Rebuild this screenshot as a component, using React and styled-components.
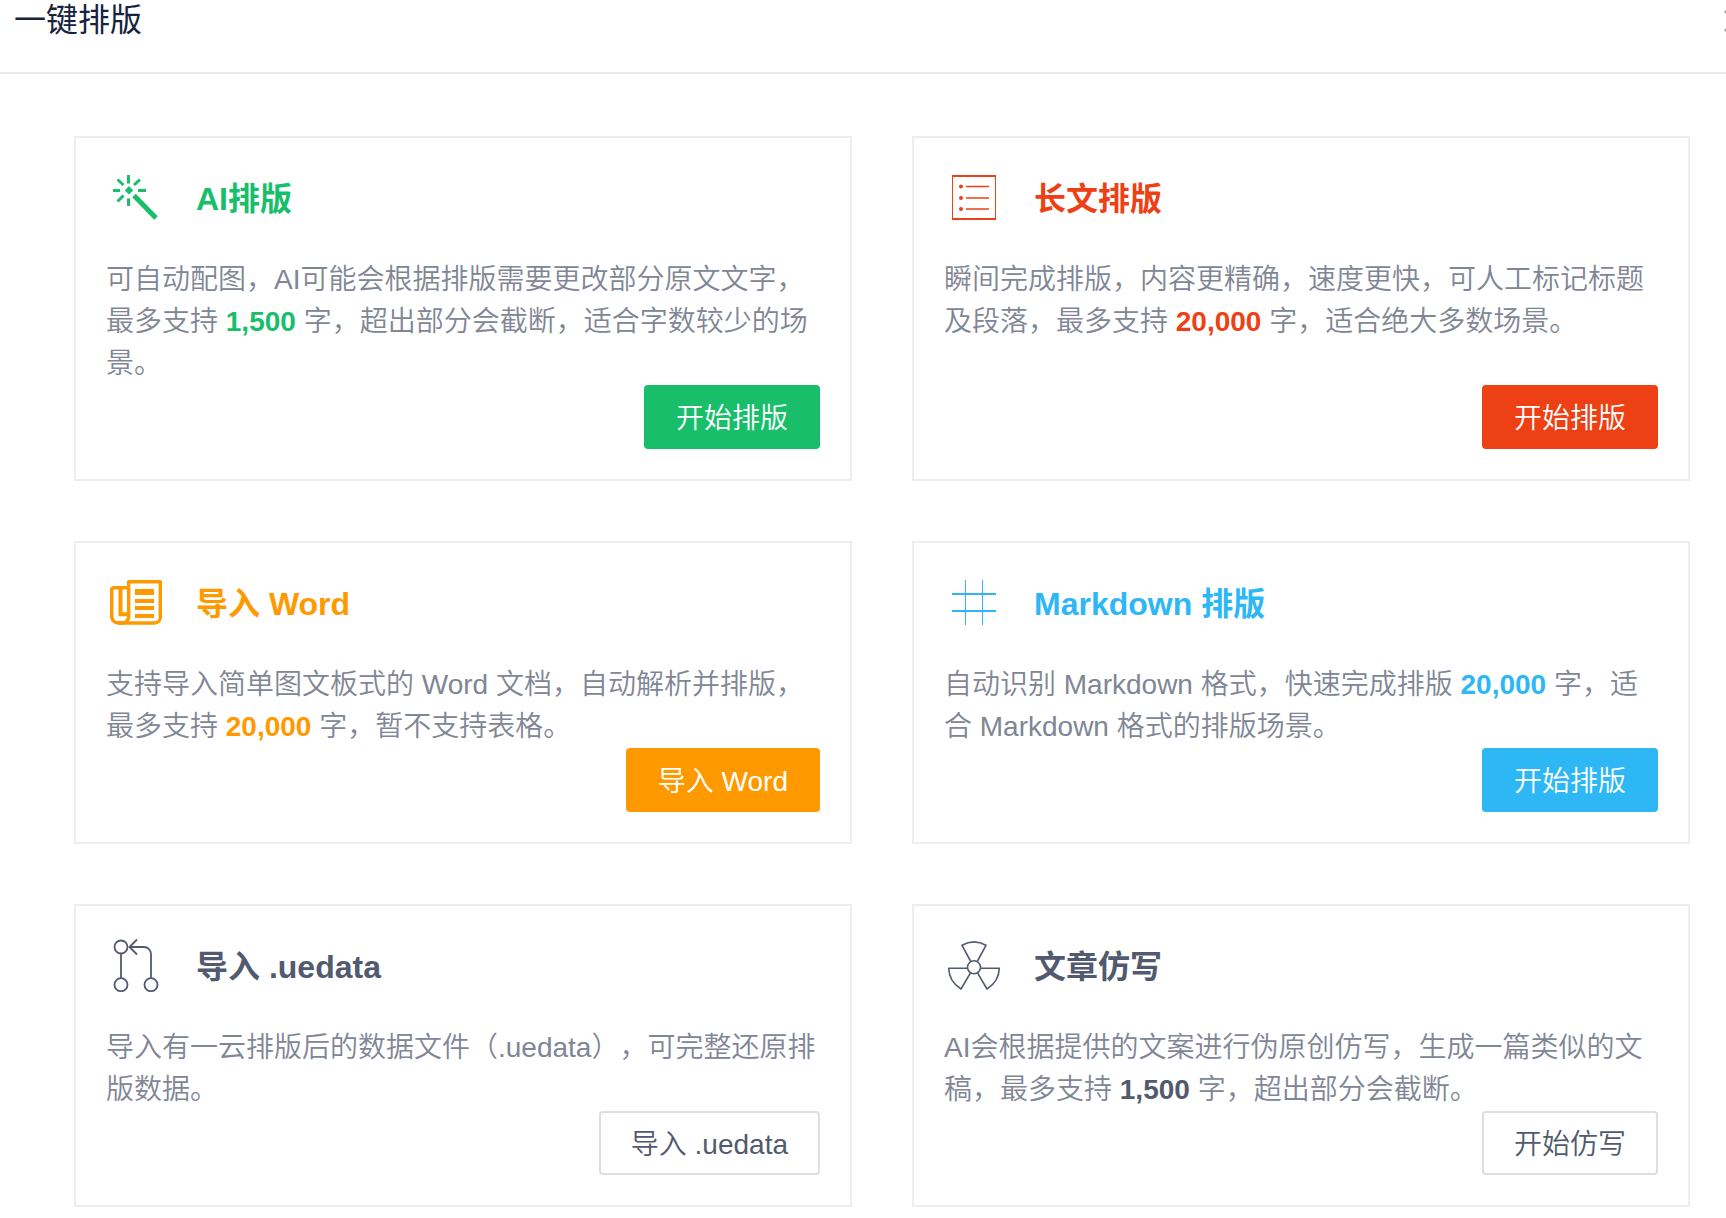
import React from "react";
import styled, { createGlobalStyle } from "styled-components";

const GlobalStyle = createGlobalStyle`
  * {
    box-sizing: border-box;
  }

  body {
    margin: 0;
    background: #fff;
    font-family: "Liberation Sans", "Noto Sans CJK SC", sans-serif;
    text-spacing-trim: space-all;
    overflow-x: hidden;
  }
`;

const Modal = styled.section`
  width: 100%;
  overflow: hidden;
`;

const ModalHeader = styled.header`
  display: flex;
  justify-content: space-between;
  align-items: flex-start;
  height: 74px;
  padding-left: 14px;
  border-bottom: 2px solid #e8eaec;
`;

const ModalTitle = styled.h1`
  margin: 0;
  font-size: 32px;
  font-weight: 400;
  line-height: 40px;
  color: #17233d;
`;

/* The close button hangs over the right edge of the dialog */
const CloseButton = styled.button`
  display: flex;
  align-items: center;
  height: 42px;
  margin-right: -20px;
  padding: 0;
  border: 0;
  background: none;
  color: #999;
  cursor: pointer;
`;

const CardGrid = styled.main`
  display: grid;
  grid-template-columns: repeat(2, minmax(0, 1fr));
  gap: 60px;
  padding: 62px 36px 10px 74px;
`;

const Card = styled.article`
  display: flex;
  flex-direction: column;
  padding: 30px;
  border: 2px solid #eee;
`;

const CardHeader = styled.div`
  display: flex;
  align-items: center;
  gap: 30px;
  height: 60px;
  margin-bottom: 31px;
  color: ${({ $color }) => $color};
`;

const CardTitle = styled.h2`
  margin: 0;
  padding-top: 2px;
  font-size: 32px;
  font-weight: 700;
  line-height: 58px;
`;

const Description = styled.p`
  flex: 1;
  margin: 0;
  font-size: 28px;
  font-weight: 350;
  line-height: 42px;
  color: #808695;
`;

const Limit = styled.strong`
  font-weight: 700;
  color: ${({ $color }) => $color};
`;

const ActionButton = styled.button`
  align-self: flex-end;
  height: 64px;
  padding: 4px 30px 0;
  border: 2px solid ${({ $color }) => $color || "#dcdee2"};
  border-radius: 4px;
  background: ${({ $color }) => $color || "#fff"};
  color: ${({ $color }) => ($color ? "#fff" : "#515a6e")};
  font-family: inherit;
  font-size: 28px;
  font-weight: 350;
  line-height: 40px;
  cursor: pointer;
`;

const Icon = ({ children }) => (
  <svg width="60" height="60" viewBox="0 0 60 60" fill="none" stroke="currentColor" aria-hidden="true">
    {children}
  </svg>
);

const WandIcon = () => (
  <Icon>
    <path
      d="M22.5 7V15.5M22.5 30.5V38M7 22.5H14M32 22.5H40M11.5 11.5L17.5 17M34 11.5L28 17M11.5 33.5L17.5 27.5"
      strokeWidth="3"
    />
    <path d="M23 18L27.2 22.5L23 26.5L18.8 22.5Z" fill="currentColor" stroke="none" />
    <path d="M28 27.5L50 50" strokeWidth="5" />
  </Icon>
);

const ListIcon = () => (
  <Icon>
    <path d="M8.5 7V52M51.5 7V52" />
    <path d="M8 8H52M8 51H52" strokeWidth="2" />
    <path d="M22 18.5H45M22 30H45M22 41H45" strokeWidth="1.6" />
    <g fill="currentColor" stroke="none">
      <circle cx="17" cy="18.5" r="2" />
      <circle cx="17" cy="30" r="2" />
      <circle cx="17" cy="41" r="2" />
    </g>
  </Icon>
);

const PaperIcon = () => (
  <Icon>
    <path d="M22.7 14.7V8.7H54.3V44.5A5.5 5.5 0 0 1 48.8 50H12" strokeWidth="3.4" strokeLinejoin="round" />
    <path
      d="M22.7 14.7H8A2.3 2.3 0 0 0 5.7 17V43.5A6.5 6.5 0 0 0 12.2 50H16A6.7 6.7 0 0 0 22.7 43.5V14.7"
      strokeWidth="3.4"
    />
    <path d="M14.5 16V41.2H22" strokeWidth="4" />
    <path d="M29 19H48" strokeWidth="6" />
    <path d="M29 28H48M29 35H48M29 43H48" strokeWidth="4" />
  </Icon>
);

const HashIcon = () => (
  <Icon>
    <path d="M21.5 7V52M38.5 7V52" />
    <path d="M8 21H52M8 38H52" strokeWidth="2" />
  </Icon>
);

const PullIcon = () => (
  <Icon>
    <g strokeWidth="1.8">
      <circle cx="15" cy="11" r="6.5" />
      <circle cx="15" cy="48.7" r="6.5" />
      <circle cx="45" cy="48.7" r="6.5" />
      <path d="M15 17.5V42.2M45 42.2V18A7 7 0 0 0 38 11H24M31 3.5L23.5 11L31 18.5" />
    </g>
  </Icon>
);

const NuclearIcon = () => (
  <Icon>
    <g strokeWidth="1.6" strokeLinejoin="round">
      <circle cx="30" cy="31.3" r="6.5" />
      <path d="M26.5 25L18 9.3Q30 2.5 42 9.3L33.5 25" />
      <path d="M23.5 32.3H4.7Q5 45.5 17 53L26.5 36.8" />
      <path d="M36.5 32.3H55.3Q55 45.5 43 53L33.5 36.8" />
    </g>
  </Icon>
);

const cards = [
  {
    title: "AI排版",
    icon: WandIcon,
    color: "#19be6b",
    before: "可自动配图，AI可能会根据排版需要更改部分原文文字，最多支持 ",
    limit: "1,500",
    after: " 字，超出部分会截断，适合字数较少的场景。",
    action: "开始排版",
  },
  {
    title: "长文排版",
    icon: ListIcon,
    color: "#ed4014",
    before: "瞬间完成排版，内容更精确，速度更快，可人工标记标题及段落，最多支持 ",
    limit: "20,000",
    after: " 字，适合绝大多数场景。",
    action: "开始排版",
  },
  {
    title: "导入 Word",
    icon: PaperIcon,
    color: "#ff9900",
    before: "支持导入简单图文板式的 Word 文档，自动解析并排版，最多支持 ",
    limit: "20,000",
    after: " 字，暂不支持表格。",
    action: "导入 Word",
  },
  {
    title: "Markdown 排版",
    icon: HashIcon,
    color: "#2db7f5",
    before: "自动识别 Markdown 格式，快速完成排版 ",
    limit: "20,000",
    after: " 字，适合 Markdown 格式的排版场景。",
    action: "开始排版",
  },
  {
    title: "导入 .uedata",
    icon: PullIcon,
    color: "#515a6e",
    plain: true,
    before: "导入有一云排版后的数据文件（.uedata），可完整还原排版数据。",
    action: "导入 .uedata",
  },
  {
    title: "文章仿写",
    icon: NuclearIcon,
    color: "#515a6e",
    plain: true,
    before: "AI会根据提供的文案进行伪原创仿写，生成一篇类似的文稿，最多支持 ",
    limit: "1,500",
    after: " 字，超出部分会截断。",
    action: "开始仿写",
  },
];

const LayoutCard = ({ card }) => {
  const CardIcon = card.icon;

  return (
    <Card>
      <CardHeader $color={card.color}>
        <CardIcon />
        <CardTitle>{card.title}</CardTitle>
      </CardHeader>
      <Description>
        {card.before}
        {card.limit && <Limit $color={card.color}>{card.limit}</Limit>}
        {card.after}
      </Description>
      <ActionButton type="button" $color={card.plain ? undefined : card.color}>
        {card.action}
      </ActionButton>
    </Card>
  );
};

const App = () => (
  <>
    <GlobalStyle />
    <Modal>
      <ModalHeader>
        <ModalTitle>一键排版</ModalTitle>
        <CloseButton type="button" aria-label="关闭">
          <svg width="22" height="22" viewBox="0 0 22 22" stroke="currentColor" strokeWidth="2.5">
            <path d="M1 1L21 21M21 1L1 21" />
          </svg>
        </CloseButton>
      </ModalHeader>
      <CardGrid>
        {cards.map((card) => (
          <LayoutCard key={card.title} card={card} />
        ))}
      </CardGrid>
    </Modal>
  </>
);

export default App;
